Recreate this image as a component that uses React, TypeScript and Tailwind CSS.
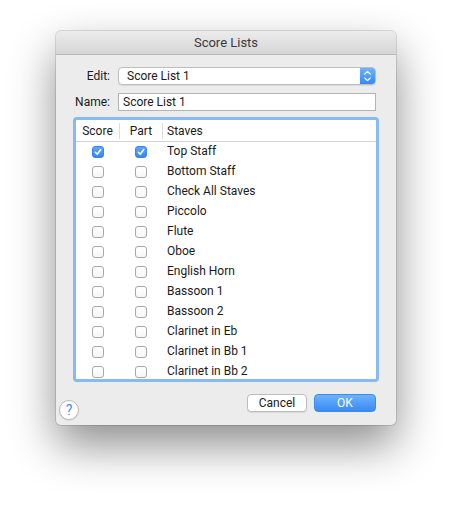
import React from 'react';

const staves = [
  { name: 'Top Staff', score: true, part: true },
  { name: 'Bottom Staff' },
  { name: 'Check All Staves' },
  { name: 'Piccolo' },
  { name: 'Flute' },
  { name: 'Oboe' },
  { name: 'English Horn' },
  { name: 'Bassoon 1' },
  { name: 'Bassoon 2' },
  { name: 'Clarinet in Eb' },
  { name: 'Clarinet in Bb 1' },
  { name: 'Clarinet in Bb 2' },
];

const Check = ({ on }: { on?: boolean }) =>
  on ? (
    <div className="w-[12px] h-[12px] rounded-[3px] bg-gradient-to-b from-[#5da6fa] to-[#3486f4] border border-[#3a82e8] flex items-center justify-center">
      <svg width="10" height="10" viewBox="0 0 10 10">
        <path d="M2.3 5.3 L4.2 7.3 L7.8 2.6" fill="none" stroke="white" strokeWidth="1.6" strokeLinecap="round" strokeLinejoin="round" />
      </svg>
    </div>
  ) : (
    <div className="w-[12px] h-[12px] rounded-[3px] bg-gradient-to-b from-white to-[#f6f6f6] border border-[#a8a8a8]" />
  );

export default function App() {
  return (
    <div className="w-[452px] h-[505px] bg-white pt-[31px] pl-[56px] font-['Roboto',sans-serif] text-[12px] text-[#1a1a1a]">
      <div className="w-[340px] h-[394px] bg-[#ececec] rounded-[5px] flex flex-col overflow-hidden shadow-[0_0_0_1px_rgba(0,0,0,0.12),0_20px_45px_rgba(0,0,0,0.45)]">
        {/* title bar */}
        <div className="h-[24px] shrink-0 bg-gradient-to-b from-[#ececec] to-[#d6d6d6] border-b border-[#b8b8b8] flex items-center justify-center text-[13px] text-[#3a3a3a]">
          Score Lists
        </div>

        <div className="flex flex-col pr-[20px] mt-[12px]">
          <div className="flex items-center h-[18px]">
            <span className="w-[62px] pr-[8px] text-right">Edit:</span>
            <div className="flex-1 h-[18px] flex bg-white rounded-[4px] border border-[#bdbdbd] shadow-[0_1px_1px_rgba(0,0,0,0.08)] overflow-hidden">
              <span className="flex-1 pl-[8px] leading-[16px]">Score List 1</span>
              <div className="w-[15px] bg-gradient-to-b from-[#6cb2fb] to-[#3788f4] flex items-center justify-center">
                <svg width="9" height="14" viewBox="0 0 9 14">
                  <path d="M1.8 5 L4.5 2.4 L7.2 5 M1.8 9 L4.5 11.6 L7.2 9" fill="none" stroke="white" strokeWidth="1.3" strokeLinecap="round" strokeLinejoin="round" />
                </svg>
              </div>
            </div>
          </div>

          <div className="flex items-center h-[18px] mt-[8px]">
            <span className="w-[62px] pr-[8px] text-right">Name:</span>
            <div className="flex-1 h-[18px] bg-white border border-[#b3b3b3] pl-[4px] leading-[16px]">Score List 1</div>
          </div>
        </div>

        {/* table */}
        <div className="mx-[17px] mt-[6px] h-[265px] border-[3px] border-[#86baf0] rounded-[4px] bg-white overflow-hidden flex flex-col">
          <div className="h-[22px] shrink-0 flex items-center border-b border-[#d4d4d4]">
            <div className="w-[43px] text-center">Score</div>
            <div className="w-[43px] text-center border-l border-[#dcdcdc] h-[16px] leading-[16px]">Part</div>
            <div className="flex-1 pl-[4px] border-l border-[#dcdcdc] h-[16px] leading-[16px]">Staves</div>
          </div>
          {staves.map((s) => (
            <div key={s.name} className="h-[20px] shrink-0 flex items-center">
              <div className="w-[43px] flex justify-center pl-[1px]">
                <Check on={s.score} />
              </div>
              <div className="w-[43px] flex justify-center pl-[1px]">
                <Check on={s.part} />
              </div>
              <div className="flex-1 pl-[5px] pb-[3px]">{s.name}</div>
            </div>
          ))}
        </div>

        {/* bottom */}
        <div className="flex items-start pt-[12px] pr-[20px]">
          <div className="ml-[3px] mt-[6px] w-[20px] h-[20px] rounded-full bg-white border border-[#b9b9b9] shadow-[0_1px_1px_rgba(0,0,0,0.1)] flex items-center justify-center text-[14px] text-[#3b8df5] leading-none">
            ?
          </div>
          <div className="flex-1" />
          <button className="w-[60px] h-[18px] rounded-[4px] bg-white border border-[#bdbdbd] shadow-[0_1px_1px_rgba(0,0,0,0.08)] text-[12px] leading-[16px] text-[#1a1a1a]">
            Cancel
          </button>
          <button className="ml-[7px] w-[62px] h-[18px] rounded-[4px] bg-gradient-to-b from-[#6bb2fb] to-[#3a8af5] border border-[#3f8ae8] text-[12px] leading-[16px] text-white">
            OK
          </button>
        </div>
      </div>
    </div>
  );
}
